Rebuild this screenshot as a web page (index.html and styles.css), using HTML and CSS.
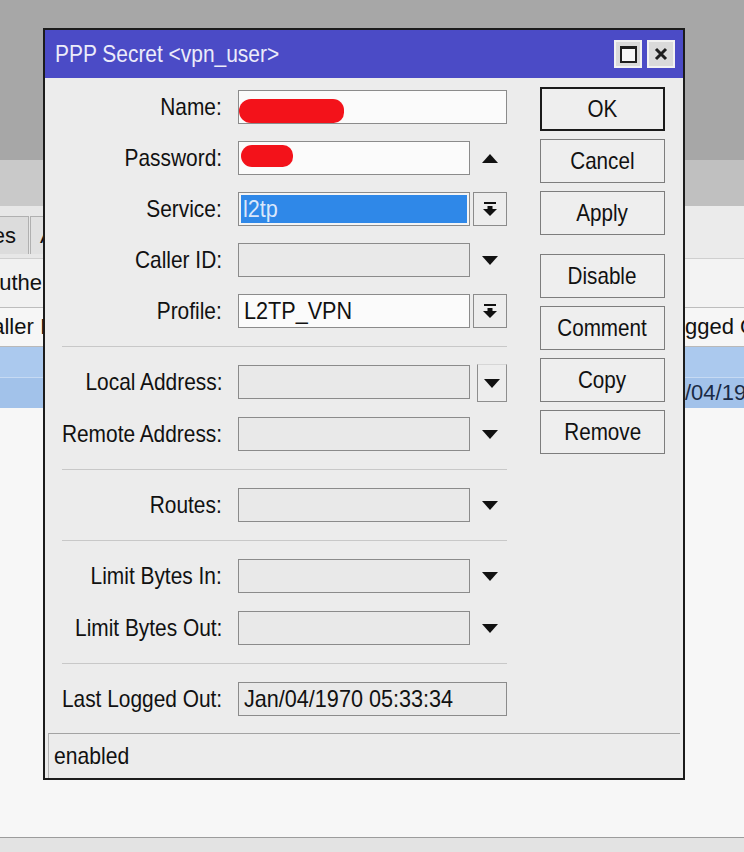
FILE: index.html
```html
<!DOCTYPE html>
<html>
<head>
<meta charset="utf-8">
<title>PPP Secret</title>
<link rel="stylesheet" href="styles.css">
</head>
<body>
<div class="app">
  <div class="band-top"></div>
  <div class="band-tool"><div></div><div></div><div class="band-tool-r"></div></div>
  <div class="bgrow tabs-row">
    <div class="lcell tabs-cell">
      <div class="tabclip"><div class="tab">Profiles</div></div>
      <div class="tab tab2">Active Connections</div>
    </div>
    <div class="mid"></div>
    <div class="rcell"></div>
  </div>
  <div class="bgrow auth-row">
    <div class="lcell"><span>Authe</span></div>
    <div class="mid"></div>
    <div class="rcell"></div>
  </div>
  <div class="bgrow head-row">
    <div class="lcell"><span>Caller I</span></div>
    <div class="mid"></div>
    <div class="rcell"><span>gged Out</span></div>
  </div>
  <div class="bgrow blue1"><div></div><div></div><div></div></div>
  <div class="bgrow blue2">
    <div></div><div></div>
    <div class="rcell"><span>/04/1970</span></div>
  </div>
  <div class="fill"></div>
  <div class="bottom-bar"></div>
</div>

<div class="dialog">
  <div class="titlebar">
    <span class="title">PPP Secret &lt;vpn_user&gt;</span>
    <div class="tbtns">
      <div class="tb"><div class="max-ico"></div></div>
      <div class="tb"><svg width="14" height="14" viewBox="0 0 14 14"><path d="M2 2 L12 12 M12 2 L2 12" stroke="#1e1e1e" stroke-width="3" fill="none"/></svg></div>
    </div>
  </div>
  <div class="content">
    <div class="form">
      <div class="group first">
        <div class="row">
          <div class="label"><span>Name:</span></div>
          <div class="field"><div class="input white full nopad"><div class="blob blob-name"></div></div></div>
        </div>
        <div class="row">
          <div class="label"><span>Password:</span></div>
          <div class="field">
            <div class="input white nopad"><div class="blob blob-pass"></div></div>
            <div class="side"><svg width="16" height="9" viewBox="0 0 16 9"><polygon points="0,9 16,9 8,0" fill="#111"/></svg></div>
          </div>
        </div>
        <div class="row">
          <div class="label"><span>Service:</span></div>
          <div class="field">
            <div class="input sel"><span class="val">l2tp</span></div>
            <div class="side-btn"><svg width="14" height="15" viewBox="0 0 14 15"><rect x="1" y="0" width="12" height="2" fill="#111"/><rect x="4.5" y="4" width="5" height="4" fill="#111"/><polygon points="0,7 14,7 7,14" fill="#111"/></svg></div>
          </div>
        </div>
        <div class="row">
          <div class="label"><span>Caller ID:</span></div>
          <div class="field">
            <div class="input"></div>
            <div class="side"><svg width="16" height="9" viewBox="0 0 16 9"><polygon points="0,0 16,0 8,9" fill="#111"/></svg></div>
          </div>
        </div>
        <div class="row">
          <div class="label"><span>Profile:</span></div>
          <div class="field">
            <div class="input white"><span class="val">L2TP_VPN</span></div>
            <div class="side-btn"><svg width="14" height="15" viewBox="0 0 14 15"><rect x="1" y="0" width="12" height="2" fill="#111"/><rect x="4.5" y="4" width="5" height="4" fill="#111"/><polygon points="0,7 14,7 7,14" fill="#111"/></svg></div>
          </div>
        </div>
      </div>
      <div class="sep"></div>
      <div class="group">
        <div class="row">
          <div class="label"><span>Local Address:</span></div>
          <div class="field">
            <div class="input"></div>
            <div class="side-btn2"><svg width="16" height="9" viewBox="0 0 16 9"><polygon points="0,0 16,0 8,9" fill="#111"/></svg></div>
          </div>
        </div>
        <div class="row">
          <div class="label"><span>Remote Address:</span></div>
          <div class="field">
            <div class="input"></div>
            <div class="side"><svg width="16" height="9" viewBox="0 0 16 9"><polygon points="0,0 16,0 8,9" fill="#111"/></svg></div>
          </div>
        </div>
      </div>
      <div class="sep"></div>
      <div class="group">
        <div class="row">
          <div class="label"><span>Routes:</span></div>
          <div class="field">
            <div class="input"></div>
            <div class="side"><svg width="16" height="9" viewBox="0 0 16 9"><polygon points="0,0 16,0 8,9" fill="#111"/></svg></div>
          </div>
        </div>
      </div>
      <div class="sep"></div>
      <div class="group">
        <div class="row">
          <div class="label"><span>Limit Bytes In:</span></div>
          <div class="field">
            <div class="input"></div>
            <div class="side"><svg width="16" height="9" viewBox="0 0 16 9"><polygon points="0,0 16,0 8,9" fill="#111"/></svg></div>
          </div>
        </div>
        <div class="row">
          <div class="label"><span>Limit Bytes Out:</span></div>
          <div class="field">
            <div class="input"></div>
            <div class="side"><svg width="16" height="9" viewBox="0 0 16 9"><polygon points="0,0 16,0 8,9" fill="#111"/></svg></div>
          </div>
        </div>
      </div>
      <div class="sep"></div>
      <div class="group">
        <div class="row">
          <div class="label"><span>Last Logged Out:</span></div>
          <div class="field"><div class="input full"><span class="val">Jan/04/1970 05:33:34</span></div></div>
        </div>
      </div>
    </div>
    <div class="buttons">
      <div class="btn default"><span>OK</span></div>
      <div class="btn"><span>Cancel</span></div>
      <div class="btn"><span>Apply</span></div>
      <div class="btn spaced"><span>Disable</span></div>
      <div class="btn"><span>Comment</span></div>
      <div class="btn"><span>Copy</span></div>
      <div class="btn"><span>Remove</span></div>
    </div>
  </div>
  <div class="status"><span>enabled</span></div>
</div>
</body>
</html>
```

FILE: styles.css
```css
* { box-sizing: border-box; }

body {
  margin: 0;
  width: 744px;
  height: 852px;
  overflow: hidden;
  position: relative;
  font-family: "Liberation Sans", Arial, sans-serif;
  color: #111;
  background: #f6f6f6;
}

/* background application window */
.app {
  display: flex;
  flex-direction: column;
  height: 852px;
}
.band-top {
  height: 160px;
  background: #a7a7a7;
}
.band-tool {
  height: 46px;
  background: #c9c9c9;
  display: grid;
  grid-template-columns: 43px 642px 59px;
}
.band-tool-r { background: #c0c0c0; }

.bgrow {
  display: grid;
  grid-template-columns: 43px 642px 59px;
  font-size: 22px;
  white-space: nowrap;
}
.lcell {
  overflow: hidden;
  display: flex;
  justify-content: flex-end;
  align-items: center;
}
.lcell span { flex-shrink: 0; }
.rcell {
  overflow: hidden;
  display: flex;
  align-items: center;
}
.mid { overflow: hidden; }

.tabs-row {
  height: 52px;
  background: #e7e7e7;
}
.tabs-cell {
  justify-content: flex-start;
  align-items: flex-end;
  padding-bottom: 4px;
}
.tabclip {
  width: 29px;
  flex-shrink: 0;
  overflow: hidden;
  display: flex;
  justify-content: flex-end;
}
.tab {
  height: 38px;
  padding: 0 12px 0 8px;
  display: flex;
  align-items: center;
  background: #dcdcdc;
  border: 1px solid #b0b0b0;
  border-bottom: none;
  flex-shrink: 0;
}
.tab2 { margin-left: 1px; padding-left: 9px; background: #e1e1e1; }
.tabs-row .rcell { background: #ebebeb; }

.auth-row {
  height: 50px;
  background: #f1f1f1;
  border-top: 1px solid #cfcfcf;
  border-bottom: 1px solid #bdbdbd;
}
.auth-row .lcell span { margin-right: 1px; }
.auth-row .rcell { background: #f3f3f3; }

.head-row {
  height: 39px;
  background: #f6f6f6;
  border-bottom: 1px solid #b9b9b9;
}
.head-row .lcell span { margin-right: -3px; }

.blue1 {
  height: 30px;
  background: #abc9ee;
}
.blue2 {
  height: 31px;
  background: #a2c2ea;
  border-top: 1px solid #c6daf3;
  color: #1a2a44;
}

.fill {
  flex: 1;
  background: #f7f7f7;
}
.bottom-bar {
  height: 15px;
  border-top: 1px solid #9c9c9c;
  background: #e3e3e3;
}

/* dialog */
.dialog {
  position: absolute;
  left: 43px;
  top: 28px;
  width: 642px;
  height: 752px;
  border: 2px solid #1c1c1c;
  background: #ececec;
  display: flex;
  flex-direction: column;
}
.titlebar {
  height: 48px;
  flex-shrink: 0;
  background: #4b4bc6;
  display: flex;
  align-items: center;
  padding: 0 8px 0 10px;
}
.title {
  display: inline-block;
  font-size: 23px;
  color: #ececfa;
  transform: scaleX(0.91);
  transform-origin: left center;
  white-space: nowrap;
}
.tbtns {
  margin-left: auto;
  display: flex;
  gap: 5px;
}
.tb {
  width: 28px;
  height: 28px;
  background: #dadada;
  border: 2px solid #f2f2f2;
  display: flex;
  align-items: center;
  justify-content: center;
}
.max-ico {
  width: 17px;
  height: 17px;
  border: 2px solid #1e1e1e;
  border-top-width: 3px;
  background: #f7f7f7;
}

.content {
  display: flex;
  padding-left: 17px;
}
.form {
  width: 445px;
  padding-top: 12px;
  display: flex;
  flex-direction: column;
}
.group {
  display: flex;
  flex-direction: column;
  gap: 18px;
}
.group.first { gap: 17px; }
.sep {
  height: 1px;
  background: #c8c8c8;
  margin: 18px 0;
}
.row {
  display: grid;
  grid-template-columns: 160px 269px;
  column-gap: 16px;
  height: 34px;
  align-items: center;
}
.label {
  display: flex;
  justify-content: flex-end;
  font-size: 24px;
  white-space: nowrap;
  min-width: 0;
}
.label span {
  display: inline-block;
  flex-shrink: 0;
  transform: scaleX(0.87);
  transform-origin: right center;
}
.field {
  display: flex;
  align-items: center;
  height: 34px;
}
.input {
  width: 232px;
  height: 34px;
  border: 1px solid #8b8b8b;
  background: #e9e9e9;
  display: flex;
  align-items: center;
  padding-left: 5px;
  overflow: hidden;
  flex-shrink: 0;
}
.input.white { background: #fbfbfb; }
.input.full { width: 269px; }
.input.nopad { padding-left: 0; }
.input.sel {
  background: #2f88e8;
  box-shadow: inset 0 0 0 2px #f4f4f4;
  padding-left: 4px;
}
.input.sel .val { color: #dbe7fb; }
.val {
  display: inline-block;
  font-size: 24px;
  transform: scaleX(0.9);
  transform-origin: left center;
  white-space: nowrap;
}
.blob {
  background: #f3121a;
  flex-shrink: 0;
}
.blob-name {
  width: 105px;
  height: 24px;
  border-radius: 13px 12px 11px 13px;
  margin-top: 8px;
}
.blob-pass {
  width: 52px;
  height: 22px;
  border-radius: 12px 11px 11px 12px;
  margin-left: 2px;
  margin-top: -4px;
}
.side {
  width: 37px;
  height: 34px;
  display: flex;
  align-items: center;
  justify-content: center;
  padding-left: 3px;
}
.side-btn {
  width: 34px;
  height: 34px;
  margin-left: 3px;
  border: 1px solid #8b8b8b;
  background: #ededed;
  display: flex;
  align-items: center;
  justify-content: center;
}
.side-btn2 {
  width: 32px;
  height: 38px;
  margin-left: 7px;
  margin-top: 2px;
  border: 1px solid #8e8e8e;
  border-top-color: #d6d6d6;
  background: #ededed;
  display: flex;
  align-items: center;
  justify-content: center;
}

.buttons {
  margin-left: 33px;
  padding-top: 9px;
  display: flex;
  flex-direction: column;
  gap: 8px;
}
.btn {
  width: 125px;
  height: 44px;
  border: 1px solid #7d7d7d;
  background: #eeeeee;
  display: flex;
  align-items: center;
  justify-content: center;
  font-size: 24px;
  white-space: nowrap;
}
.btn span {
  display: inline-block;
  transform: scaleX(0.86);
}
.btn.default { border: 2px solid #1a1a1a; }
.btn.spaced { margin-top: 11px; }

.status {
  margin: auto 3px 0 3px;
  height: 45px;
  border-top: 1px solid #a3a3a3;
  border-left: 1px solid #b3b3b3;
  padding-left: 5px;
  display: flex;
  align-items: center;
  font-size: 24px;
}
.status span {
  display: inline-block;
  transform: scaleX(0.88);
  transform-origin: left center;
}
```
